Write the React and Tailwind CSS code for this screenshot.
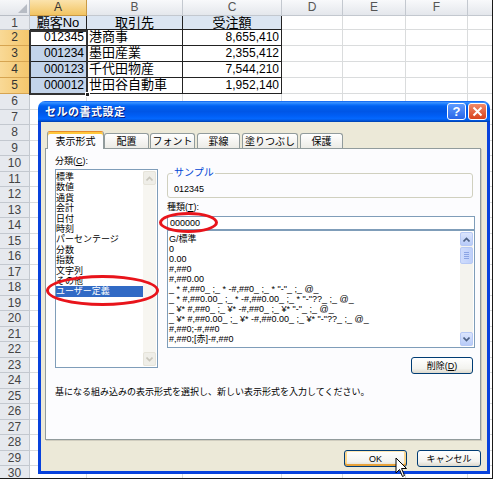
import React from "react";

const COLS = [
  { k: "A", w: "w-[57px]" },
  { k: "B", w: "w-[96px]" },
  { k: "C", w: "w-[99px]" },
  { k: "D", w: "w-[61px]" },
  { k: "E", w: "w-[63px]" },
  { k: "F", w: "w-[62px]" },
];

const DATA = [
  ["顧客No", "取引先", "受注額"],
  ["012345", "港商事", "8,655,410"],
  ["001234", "墨田産業", "2,355,412"],
  ["000123", "千代田物産", "7,544,210"],
  ["000012", "世田谷自動車", "1,952,140"],
];

const CATEGORIES = [
  "標準",
  "数値",
  "通貨",
  "会計",
  "日付",
  "時刻",
  "パーセンテージ",
  "分数",
  "指数",
  "文字列",
  "その他",
  "ユーザー定義",
];

const FORMATS = [
  "G/標準",
  "0",
  "0.00",
  "#,##0",
  "#,##0.00",
  '_ * #,##0_ ;_ * -#,##0_ ;_ * "-"_ ;_ @_',
  '_ * #,##0.00_ ;_ * -#,##0.00_ ;_ * "-"??_ ;_ @_',
  '_ ¥* #,##0_ ;_ ¥* -#,##0_ ;_ ¥* "-"_ ;_ @_',
  '_ ¥* #,##0.00_ ;_ ¥* -#,##0.00_ ;_ ¥* "-"??_ ;_ @_',
  "#,##0;-#,##0",
  "#,##0;[赤]-#,##0",
];

function rowHeight(r) {
  if (r === 1) return "h-[14px]";
  if (r <= 5) return "h-[16px]";
  return "h-[15.5px]";
}

function Sheet() {
  const rows = Array.from({ length: 30 }, (_, i) => i + 1);
  return (
    <div className="text-[#333]">
      <div className="flex h-[16px]">
        <div className="relative w-[30px] shrink-0 border-r border-b border-[#b9bec6] bg-[linear-gradient(#f6f7f9,#e3e6eb)]">
          <svg className="absolute right-[2px] bottom-[2px]" width="9" height="9" viewBox="0 0 9 9">
            <polygon points="9,0 9,9 0,9" fill="#b7bcc4" />
          </svg>
        </div>
        {COLS.map((c) => (
          <div
            key={c.k}
            className={
              c.k === "A"
                ? `${c.w} shrink-0 border-r border-b border-[#c99a45] bg-[linear-gradient(#fbe3ad,#f2c462)] text-center text-[12px] leading-[15px]`
                : `${c.w} shrink-0 border-r border-b border-[#c3c8cf] bg-[linear-gradient(#f8f9fb,#e4e7ec)] text-center text-[12px] leading-[15px] text-[#555]`
            }
          >
            {c.k}
          </div>
        ))}
        <div className="flex-1 border-b border-[#c3c8cf] bg-[linear-gradient(#f8f9fb,#e4e7ec)]" />
      </div>

      {rows.map((r) => (
        <div key={r} className={`flex ${rowHeight(r)}`}>
          <div
            className={
              r >= 2 && r <= 5
                ? "w-[30px] shrink-0 border-r border-b border-[#d6a451] bg-[linear-gradient(90deg,#f9d996,#f4c66c)] text-center text-[12px] leading-[15px]"
                : "w-[30px] shrink-0 border-r border-b border-[#c3c8cf] bg-[#e6e9ee] text-center text-[12px] leading-[15px] text-[#444]"
            }
          >
            {r}
          </div>
          {COLS.map((c, ci) => {
            const isData = r <= 5 && ci < 3;
            if (!isData) {
              return <div key={c.k} className={`${c.w} shrink-0 border-r border-b border-[#dadcdd]`} />;
            }
            const v = DATA[r - 1][ci];
            const cjk = r === 1 || ci === 1;
            let cls = `${c.w} shrink-0 border-r border-b border-[#222] overflow-hidden whitespace-nowrap px-[2px] text-black`;
            cls += cjk ? " text-[13px] leading-[14px]" : " text-[12px] leading-[15px]";
            if (r === 1) cls += " bg-[#dbe5f1] text-center";
            else if (ci === 1) cls += " text-left";
            else cls += " text-right";
            if (ci === 0 && r >= 3) cls += " bg-[#c3d4ea]";
            return (
              <div key={c.k} className={cls}>
                {v}
              </div>
            );
          })}
          <div className="flex-1 border-b border-[#dadcdd]" />
        </div>
      ))}
    </div>
  );
}

function Chevron({ up, color }) {
  return (
    <svg width="7" height="5" viewBox="0 0 7 5">
      <polyline
        points={up ? "0.5,4.5 3.5,1.5 6.5,4.5" : "0.5,0.5 3.5,3.5 6.5,0.5"}
        fill="none"
        stroke={color}
        strokeWidth="1.6"
      />
    </svg>
  );
}

function XpButton({ children, w, focused }) {
  return (
    <div
      className={
        focused
          ? `${w} h-[17px] flex items-center justify-center rounded-[3px] border border-[#003c74] bg-[linear-gradient(#ffffff,#f3f3ef_70%,#dcd8cc)] shadow-[inset_0_1px_0_#ffe7b3,inset_0_-2px_0_#e8a23a,inset_2px_0_0_#fbd68c,inset_-2px_0_0_#fbd68c] text-[9px] leading-[10px] text-black`
          : `${w} h-[17px] flex items-center justify-center rounded-[3px] border border-[#003c74] bg-[linear-gradient(#ffffff,#f3f3ef_70%,#dcd8cc)] text-[9px] leading-[10px] text-black`
      }
    >
      {children}
    </div>
  );
}

function Dialog() {
  return (
    <div className="absolute left-[38px] top-[101px] w-[452px] h-[373px] flex flex-col">
      <div className="h-[21px] shrink-0 flex items-center pl-[7px] pr-[3px] rounded-t-[7px] bg-[linear-gradient(#0a5ff0_0%,#3d95ff_8%,#1a7cff_14%,#0061f0_24%,#0056e6_50%,#005ef5_70%,#0468fe_85%,#0052d6_94%,#003ea8_100%)]">
        <span className="text-white font-bold text-[11px] leading-[12px] [text-shadow:1px_1px_0_#0a1f80] tracking-[0.5px]">
          セルの書式設定
        </span>
        <div className="ml-auto flex gap-[2px]">
          <div className="w-[19px] h-[17px] rounded-[3px] border border-white bg-[linear-gradient(#5e9bff,#2865e8)] flex items-center justify-center text-white font-bold text-[13px] leading-[13px]">
            ?
          </div>
          <div className="w-[19px] h-[17px] rounded-[3px] border border-white bg-[linear-gradient(#f08a6a,#d9431c)] flex items-center justify-center">
            <svg width="11" height="11" viewBox="0 0 11 11">
              <path d="M1.5 1.5 L9.5 9.5 M9.5 1.5 L1.5 9.5" stroke="#fff" strokeWidth="2" />
            </svg>
          </div>
        </div>
      </div>

      <div className="flex-1 flex flex-col border-[3px] border-t-0 border-[#0842dd] bg-[#ece9d8] pt-[9px] pl-[4px] pr-[6px]">
        <div className="flex items-end h-[17px] pl-[2px] text-[10px] leading-[11px] text-black">
          <div className="relative z-10 w-[57px] h-[18px] -mb-[1px] rounded-t-[3px] border border-b-0 border-[#919b9c] border-t-[#e68b2c] bg-[#fcfcfe] shadow-[inset_0_2px_0_#ffc83c] flex items-center justify-center pt-[1px]">
            表示形式
          </div>
          <div className="w-[45px] h-[15px] rounded-t-[3px] border border-b-0 border-[#919b9c] bg-[linear-gradient(#ffffff,#ecebe6)] flex items-center justify-center">
            配置
          </div>
          <div className="ml-[1px] w-[45px] h-[15px] rounded-t-[3px] border border-b-0 border-[#919b9c] bg-[linear-gradient(#ffffff,#ecebe6)] flex items-center justify-center">
            フォント
          </div>
          <div className="ml-[2px] w-[43px] h-[15px] rounded-t-[3px] border border-b-0 border-[#919b9c] bg-[linear-gradient(#ffffff,#ecebe6)] flex items-center justify-center">
            罫線
          </div>
          <div className="ml-[2px] w-[56px] h-[15px] rounded-t-[3px] border border-b-0 border-[#919b9c] bg-[linear-gradient(#ffffff,#ecebe6)] flex items-center justify-center">
            塗りつぶし
          </div>
          <div className="ml-[2px] w-[43px] h-[15px] rounded-t-[3px] border border-b-0 border-[#919b9c] bg-[linear-gradient(#ffffff,#ecebe6)] flex items-center justify-center">
            保護
          </div>
        </div>

        <div className="h-[292px] border border-[#919b9c] bg-[#fcfcfe] shadow-[1px_1px_0_#d0cdbf] text-[9px] leading-[10px] text-black">
          <div className="flex pl-[9px] pt-[7px] pr-[5px]">
            <div className="w-[103px] shrink-0">
              <div className="h-[10px]">
                分類(<span className="underline">C</span>):
              </div>
              <div className="mt-[3px] h-[199px] border border-[#7f9db9] bg-white flex">
                <div className="flex-1 pt-[2px] leading-[10.4px]">
                  {CATEGORIES.map((c) => (
                    <div
                      key={c}
                      className={
                        c === "ユーザー定義"
                          ? "h-[10.4px] bg-[#316ac5] text-white whitespace-nowrap"
                          : "h-[10.4px] whitespace-nowrap"
                      }
                    >
                      {c}
                    </div>
                  ))}
                </div>
                <div className="w-[13px] mr-[1px] my-[1px] flex flex-col bg-[#f7f6f1]">
                  <div className="h-[14px] rounded-[2px] border border-[#e6e4da] bg-[#efeee8] flex items-center justify-center">
                    <Chevron up color="#c9c7bd" />
                  </div>
                  <div className="flex-1" />
                  <div className="h-[14px] rounded-[2px] border border-[#e6e4da] bg-[#efeee8] flex items-center justify-center">
                    <Chevron color="#c9c7bd" />
                  </div>
                </div>
              </div>
            </div>

            <div className="ml-[9px] w-[308px] shrink-0 pt-[12px]">
              <fieldset className="h-[30px] w-[306px] rounded-[3px] border border-[#d0d0bf] pl-[6px]">
                <legend className="ml-[-1px] px-[1px] text-[#0046d5] text-[10px] leading-[10px]">
                  サンプル
                </legend>
                <div className="mt-[6px]">012345</div>
              </fieldset>
              <div className="mt-[4px] h-[10px]">
                種類(<span className="underline">T</span>):
              </div>
              <div className="mt-[4px] h-[14px] border border-[#7f9db9] bg-white pl-[2px] flex items-center">
                000000
              </div>
              <div className="h-[118px] border border-[#7f9db9] bg-white flex">
                <div className="flex-1 overflow-hidden pl-[1px] pt-[3px] whitespace-nowrap">
                  {FORMATS.map((f) => (
                    <div key={f} className="h-[10px]">
                      {f}
                    </div>
                  ))}
                </div>
                <div className="w-[13px] mr-[1px] my-[1px] flex flex-col bg-[#f4f3ee]">
                  <div className="h-[14px] rounded-[2px] border border-[#b7c9f5] bg-[linear-gradient(#dbe5fd,#b8cbf8)] flex items-center justify-center">
                    <Chevron up color="#4d6185" />
                  </div>
                  <div className="mt-[1px] h-[17px] rounded-[2px] border border-[#b7c9f5] bg-[linear-gradient(90deg,#cfdcfc,#bfd0fa)] flex flex-col items-center justify-center gap-[1px]">
                    <div className="w-[5px] h-[1px] bg-[#8ba4e4]" />
                    <div className="w-[5px] h-[1px] bg-[#8ba4e4]" />
                    <div className="w-[5px] h-[1px] bg-[#8ba4e4]" />
                    <div className="w-[5px] h-[1px] bg-[#8ba4e4]" />
                  </div>
                  <div className="flex-1" />
                  <div className="h-[14px] rounded-[2px] border border-[#b7c9f5] bg-[linear-gradient(#dbe5fd,#b8cbf8)] flex items-center justify-center">
                    <Chevron color="#4d6185" />
                  </div>
                </div>
              </div>
              <div className="mt-[9px] flex justify-end pr-[2px]">
                <XpButton w="w-[62px]">
                  削除(<span className="underline">D</span>)
                </XpButton>
              </div>
            </div>
          </div>
          <div className="mt-[13px] pl-[9px] whitespace-nowrap">
            基になる組み込みの表示形式を選択し、新しい表示形式を入力してください。
          </div>
        </div>

        <div className="mt-[10px] flex justify-end gap-[10px]">
          <XpButton w="w-[63px]" focused>
            OK
          </XpButton>
          <XpButton w="w-[64px]">キャンセル</XpButton>
        </div>
      </div>
    </div>
  );
}

export default function App() {
  return (
    <div className="relative w-[493px] h-[479px] overflow-hidden bg-white border-r border-b border-[#1a1a1a] font-['Liberation_Sans','Noto_Sans_CJK_JP',sans-serif]">
      <Sheet />

      {/* selection A2:A5 */}
      <div className="absolute left-[29px] top-[30px] w-[59px] h-[65px] border-2 border-[#333]" />
      <div className="absolute left-[85px] top-[92px] w-[5px] h-[5px] bg-[#222] border border-white" />

      <Dialog />

      {/* red marks */}
      <div className="absolute left-[46px] top-[275px] w-[113px] h-[31px] rounded-[50%] border-[3px] border-[#e8141b]" />
      <div className="absolute left-[159px] top-[212px] w-[59px] h-[21px] rounded-[50%] border-[3px] border-[#e8141b]" />

      {/* mouse pointer */}
      <svg className="absolute left-[395px] top-[457px]" width="13" height="21" viewBox="0 0 13 21">
        <path d="M1 1 L1 16 L4.5 12.5 L7.5 19.5 L9.5 18.5 L6.5 11.5 L11.5 11.5 Z" fill="#fff" stroke="#000" strokeWidth="1" />
      </svg>
    </div>
  );
}
